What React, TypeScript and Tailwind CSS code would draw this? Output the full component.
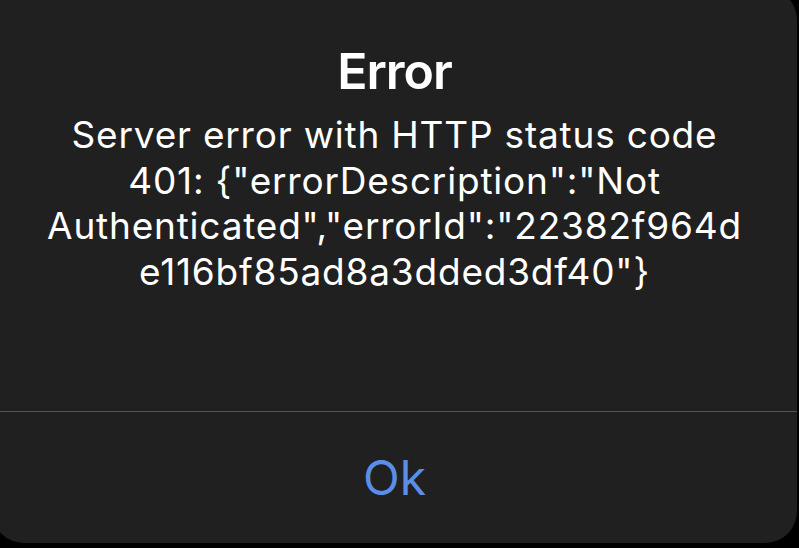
import React from "react";

export default function App() {
  return (
    <div className="w-[799px] h-[548px] bg-black overflow-hidden" style={{ fontFamily: "Inter, 'Noto Sans', sans-serif" }}>
      <div className="ml-[-8px] mt-[-12px] w-[805px] h-[555px] rounded-[32px] bg-[#202020] flex flex-col">
        <div className="h-[423px] flex flex-col items-center pt-[53px] px-[40px]">
          <div className="text-white text-[50px] leading-[60px] font-semibold tracking-[-1px]">Error</div>
          <div className="mt-[11px] text-white text-[37px] leading-[45.5px] text-center tracking-[0.8px] w-[705px]">
            Server error with HTTP status code 401: {"{\"errorDescription\":\"Not Authenticated\",\"errorId\":\"22382f964d e116bf85ad8a3dded3df40\"}"}
          </div>
        </div>
        <div className="h-px bg-[#545454]" />
        <div className="flex-1 flex items-center justify-center">
          <div className="text-[#5b8ee6] text-[48px] leading-none">Ok</div>
        </div>
      </div>
    </div>
  );
}
